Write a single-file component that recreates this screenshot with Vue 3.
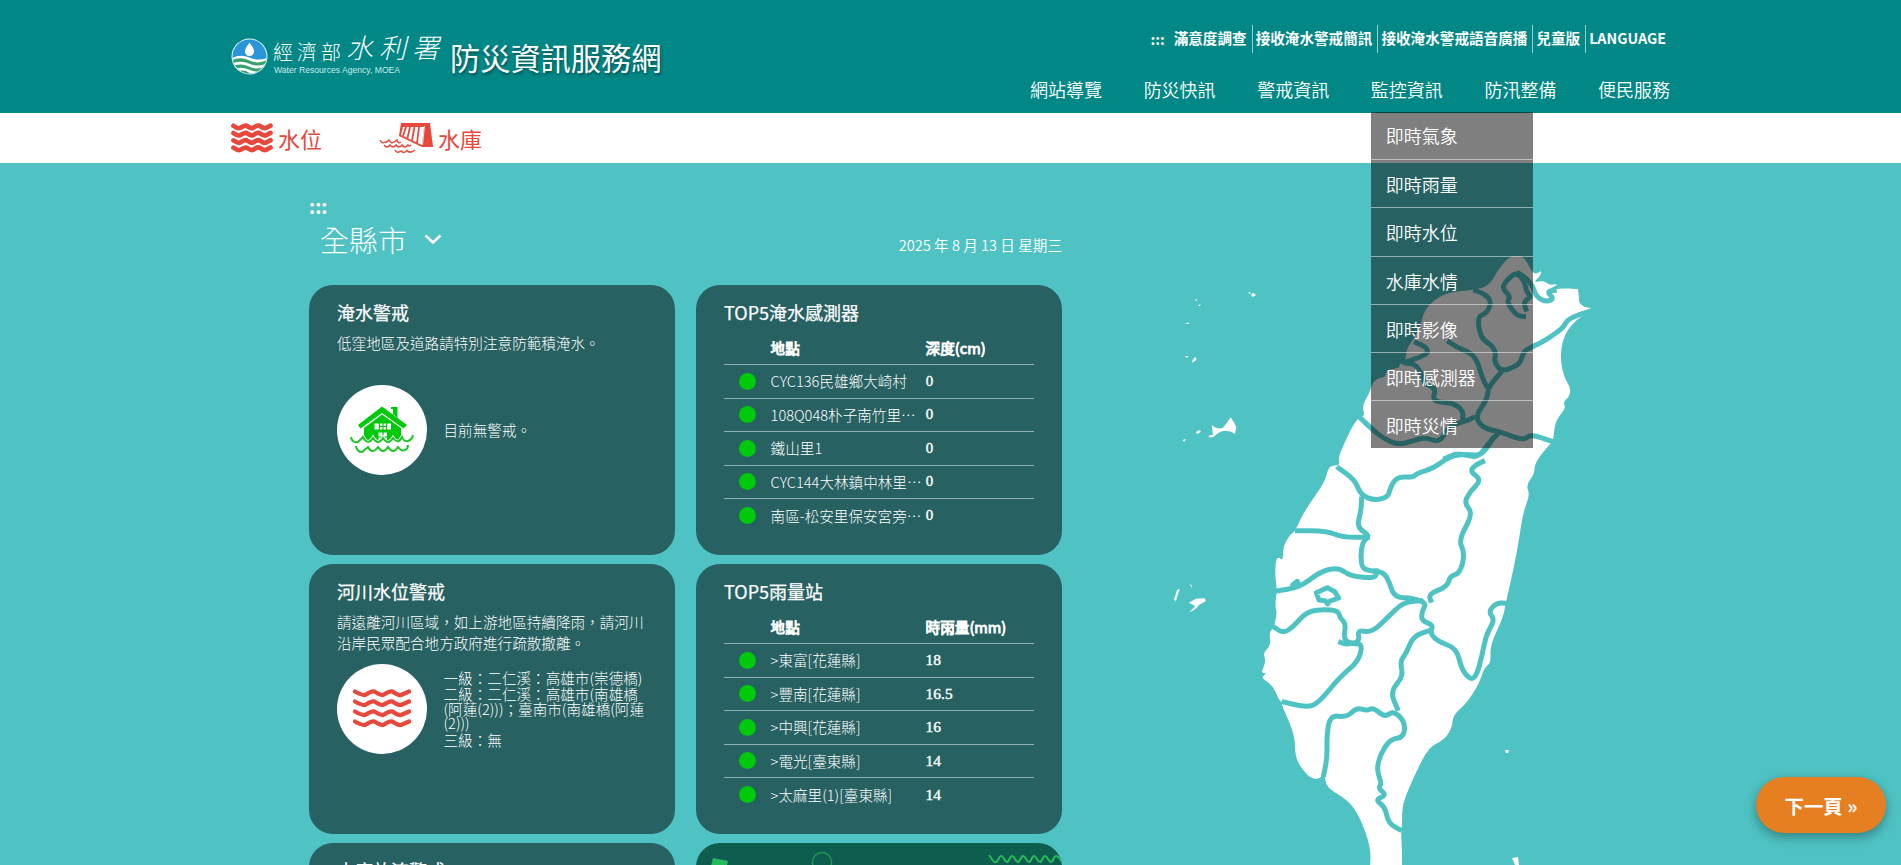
<script setup>
const topLinks = ['滿意度調查', '接收淹水警戒簡訊', '接收淹水警戒語音廣播', '兒童版', 'LANGUAGE']
const nav = ['網站導覽', '防災快訊', '警戒資訊', '監控資訊', '防汛整備', '便民服務']
const menu = ['即時氣象', '即時雨量', '即時水位', '水庫水情', '即時影像', '即時感測器', '即時災情']
const flood = [
  ['CYC136民雄鄉大崎村', '0'],
  ['108Q048朴子南竹里…', '0'],
  ['鐵山里1', '0'],
  ['CYC144大林鎮中林里…', '0'],
  ['南區-松安里保安宮旁…', '0'],
]
const rain = [
  ['>東富[花蓮縣]', '18'],
  ['>豐南[花蓮縣]', '16.5'],
  ['>中興[花蓮縣]', '16'],
  ['>電光[臺東縣]', '14'],
  ['>太麻里(1)[臺東縣]', '14'],
]

// Rounds a list of points into a smooth path through segment midpoints.
function smooth(str, closed = false) {
  const p = str.trim().split(/\s+/).map((s) => s.split(',').map(Number))
  const mid = (a, b) => `${((a[0] + b[0]) / 2).toFixed(1)},${((a[1] + b[1]) / 2).toFixed(1)}`
  const n = p.length
  if (closed) {
    let d = `M${mid(p[n - 1], p[0])}`
    for (let i = 0; i < n; i++) d += `Q${p[i]} ${mid(p[i], p[(i + 1) % n])}`
    return d + 'Z'
  }
  let d = `M${p[0]}L${mid(p[0], p[1])}`
  for (let i = 1; i < n - 1; i++) d += `Q${p[i]} ${mid(p[i], p[i + 1])}`
  return d + `L${p[n - 1]}`
}

const land = smooth(`1512,256 1522,256 1527,262 1532,272 1536,274 1541,271 1541,271 1541,275 1535,281 1535,282 1543,281 1547,283
 1550,285 1557,284 1557,285 1551,288 1549,291 1560,288 1578,289 1578,289 1578,289 1579,298 1579,303 1584,307 1591,308 1591,308 1590,311 1577,319
 1565,333 1560,353 1563,375 1571,389 1569,397 1563,402 1566,408 1556,420 1554,432 1553,441 1550,444 1535,462 1534,475 1526,485 1530,495
 1523,512 1517,553 1506,602 1503,618 1490,645 1491,663 1484,668 1479,684 1466,704 1453,715 1452,728 1444,740 1429,747 1416,772 1404,800
 1402,812 1402,826 1401,832 1402,850 1402,870 1402,870 1370,870 1370,870 1371,848 1360,817 1348,800 1327,788 1325,777 1322,772 1322,777 1314,780 1305,773
 1295,758 1295,735 1282,706 1282,702 1279,700 1273,686 1262,678 1263,676 1267,673 1262,673 1262,671 1266,661 1263,653 1271,645
 1269,632 1274,628 1275,622 1277,612 1275,606 1277,590 1275,574 1276,559 1279,557 1283,561 1283,547 1289,536 1294,532 1296,529 1305,510
 1325,482 1328,468 1334,465 1340,465 1338,458 1344,444 1352,427 1359,417 1365,416 1362,406 1369,394 1374,379 1386,377 1386,370 1400,368 1399,364
 1405,363 1407,348 1413,340 1420,328 1424,311 1435,299 1450,292 1473,290 1489,286 1498,270 1506,260`, true)

const north = [
  '340,570 375,582 395,605 380,640 352,650 362,715 395,735 408,760 402,785 425,815 465,800 483,785 490,755 519,738 545,728 590,698 612,680 625,655 700,630',
  '498,650 470,648 440,605 452,590 426,565 440,540 470,516 495,545 498,575 515,590 490,605 500,635',
  '470,516 500,535 519,560 530,592 560,606 582,596 560,575 590,570',
  '262,722 290,742 335,760 355,790 365,830 385,870 395,850 425,815',
  '385,870 380,900 345,950 370,985 420,995 490,1022 512,1002 578,1025',
  '162,725 200,742 205,762 155,780 125,790 165,790 190,830 190,850 230,865 215,905 280,908 312,935 305,970 345,950',
  '310,965 265,980 240,1028 195,1012 160,1022 115,1035 70,1015 33,985 -8,945',
  '250,1078 290,1060 320,1066 355,1072 385,1030 420,995',
]
const middle = [
  '290,80 345,120 362,165 405,182 445,170 450,145 470,110 520,112 530,100 580,85 630,48 680,42 725,48 762,-10',
  '365,170 363,215 350,262 392,288 365,305 362,380 385,392 430,396 448,425 462,472 520,474 560,490 545,515 545,542 580,555 570,580 595,605 650,625 665,690 695,722 712,700 725,650 740,580 765,540 745,515 770,488 800,490',
  '165,272 260,272 305,292 390,292',
  '735,62 705,75 690,95 725,120 690,155 672,190 700,220 655,300 675,340 660,400 630,408 622,440 565,462 575,488',
  '105,454 180,442 240,395 295,382 330,408 410,416 408,385',
  '100,560 130,580 160,560 200,515 250,508 295,512 300,535 318,550 310,600 340,612 368,612 355,665 300,710 235,790 200,802 125,785',
  '295,605 320,614 360,605 352,570 395,578 440,535 490,486 550,482',
  '575,570 520,588 498,640 480,665 490,710 450,755 475,812',
]
const south = [
  '250,410 262,350 260,290 270,225 320,232 350,203 380,212 400,203 435,232 460,212 495,245 492,292 450,298 420,345 410,390 425,430 415,445 440,465 405,480 435,500 445,550 485,572',
]

const zigzag = smooth('293,12 300,22 305,10 311,22 316,10 322,22 327,10 333,22 338,10 344,22 349,10 355,22 360,10 368,22')
</script>

<template>
  <div class="page">
    <header class="header">
      <div class="brand">
        <svg class="emblem" viewBox="0 0 36 36">
          <defs><clipPath id="disc"><circle cx="18" cy="18" r="16.5" /></clipPath></defs>
          <circle cx="18" cy="18" r="17.5" fill="#dff1f2" />
          <g clip-path="url(#disc)">
            <rect width="36" height="36" fill="#2a95d8" />
            <path d="M0 20Q9 15 18 19Q27 23 36 19V36H0Z" fill="#fff" />
            <path d="M0 22Q9 17.500 18 22Q27 26 36 21V24Q27 29 18 25Q9 21 0 25Z" fill="#35a36b" />
            <path d="M0 28Q9 23.500 18 28Q27 32 36 26V29.500Q27 35 18 31Q9 27 0 31Z" fill="#35a36b" />
            <path d="M6 33Q12 30 18 34L24 36H8Z" fill="#35a36b" />
          </g>
          <path d="M18 4.500Q22.500 10 22.500 13A4.500 4.500 0 0 1 13.500 13Q13.500 10 18 4.500Z" fill="#fff" />
        </svg>
        <div class="agency">
          <div class="agency-name"><span class="ministry">經濟部</span><span class="bureau">水利署</span></div>
          <div class="agency-en">Water Resources Agency, MOEA</div>
        </div>
        <h1>防災資訊服務網</h1>
      </div>
      <div class="menus">
        <div class="toplinks">
          <span class="marker">:::</span>
          <a v-for="l in topLinks" :key="l">{{ l }}</a>
        </div>
        <nav>
          <div v-for="n in nav" :key="n" class="nav-item">
            {{ n }}
            <ul v-if="n === '監控資訊'" class="dropdown">
              <li v-for="m in menu" :key="m">{{ m }}</li>
            </ul>
          </div>
        </nav>
      </div>
    </header>

    <div class="alerts">
      <div class="alert">
        <svg width="42" height="30" viewBox="0 0 42 30" fill="none" stroke="#e8473c" stroke-width="4.700" stroke-linecap="round" stroke-linejoin="round">
          <path v-for="i in 4" :key="i" :transform="`translate(0 ${(i - 1) * 7.3})`" d="M2.500 2.800Q7 6 9 5Q14.500 1.500 16 3Q20.500 6 22 5Q27 1.500 29 3Q33 6 35 5L39.500 2.600" />
        </svg>
        <span>水位</span>
      </div>
      <div class="alert">
        <svg width="54" height="32" viewBox="0 0 54 32">
          <path d="M22 1H51L54 25H43L20 14Z" fill="#e8473c" />
          <path d="M24 5H45L43 23L22 13Z" fill="#fff" />
          <path d="M27 5L24 14M31 5L28.500 16M35.500 5L33 18.500M40 5L38 21" stroke="#e8473c" stroke-width="1.800" />
          <path d="M45.500 4L43.500 23" stroke="#fff" stroke-width=".8" />
          <g fill="none" stroke="#e8473c" stroke-width="1.500">
            <path d="M1 18Q3 22 6 20Q7 21 10 18Q12 22 15 20L18 18Q19 22 22 20" />
            <path d="M5 23Q8 27 11 23Q14 27 17 23Q20 27 23 23Q26 27 29 23Q30 25 32 23" />
            <path d="M16 28Q18 32 22 29Q25 32 28 28.500Q31 32 36 28" />
          </g>
        </svg>
        <span>水庫</span>
      </div>
    </div>

    <main>
      <section class="left">
        <div class="dots">:::</div>
        <div class="filter">
          <div class="county">全縣市
            <svg width="18" height="11" viewBox="0 0 18 11" fill="none" stroke="#fff" stroke-width="2.400"><path d="M1.500 1.500L9 8.500L16.500 1.500" /></svg>
          </div>
          <div class="date">2025 年 8 月 13 日 星期三</div>
        </div>
        <div class="cards">
          <article class="card">
            <h2>淹水警戒</h2>
            <p class="desc">低窪地區及道路請特別注意防範積淹水。</p>
            <div class="status">
              <div class="disc">
                <svg width="64" height="48" viewBox="0 0 64 48">
                  <path d="M41 1H47.500V12L43 8V3H41Z" fill="#00c80a" />
                  <path d="M32 0.500L57 19L53.500 22.500L32 7L10.500 22.500L8 19Z" fill="#00c80a" />
                  <path d="M32 8.500L51 22V35Q46 37 43 33Q38 38 33 33Q28 38 23 33Q18 37 14 31V22Z" fill="#00c80a" />
                  <path d="M24.500 17.500H41V23.500H24.500ZM28.500 26.500H37V35H28.500Z" fill="#fff" />
                  <path d="M29.500 17V24M33 17V24M36.500 17V24M29 20.500H37M33 26V35M28 31H38" stroke="#00c80a" stroke-width="1.200" />
                  <path d="M1 31Q2 37 8 36L13 31Q18 40 23 32Q28 40 33 32Q38 40 43 32Q48 39 52 31Q54 36 58 35Q62 34 63 29" fill="none" stroke="#fff" stroke-width="3.600" />
                  <g fill="none" stroke="#1fc42a" stroke-width="2"><path d="M1 31Q2 37 8 36L13 31Q18 40 23 32Q28 40 33 32Q38 40 43 32Q48 39 52 31Q54 36 58 35Q62 34 63 29" /><path d="M6 40Q7 46 12 46L18 41Q22 49 28 41Q33 49 38 41Q43 49 48 41Q52 46 55 44Q58 43 58 39" /></g>
                </svg>
              </div>
              <div class="lines"><p>目前無警戒。</p></div>
            </div>
          </article>

          <article class="card">
            <h2>TOP5淹水感測器</h2>
            <div class="table">
              <div class="tr th"><span></span><span>地點</span><span>深度(cm)</span></div>
              <div v-for="r in flood" :key="r[0]" class="tr"><i></i><span class="place">{{ r[0] }}</span><b class="zero">{{ r[1] }}</b></div>
            </div>
          </article>

          <article class="card">
            <h2>河川水位警戒</h2>
            <p class="desc">請遠離河川區域，如上游地區持續降雨，請河川沿岸民眾配合地方政府進行疏散撤離。</p>
            <div class="status">
              <div class="disc">
                <svg width="60" height="42" viewBox="0 0 60 42" fill="none" stroke="#e8473c" stroke-width="4.300" stroke-linecap="round" stroke-linejoin="round">
                  <path v-for="i in 4" :key="i" :transform="`translate(0 ${(i - 1) * 10})`" d="M3 3.500Q10 7.500 13 7Q20 2.500 22.500 3.500Q29 7.500 31 7Q38 2.500 40.500 3.500Q46 7.500 49 7L57 3.500" />
                </svg>
              </div>
              <div class="lines">
                <p>一級：二仁溪：高雄市(崇德橋)</p>
                <p>二級：二仁溪：高雄市(南雄橋(阿蓮(2)))；臺南市(南雄橋(阿蓮(2)))</p>
                <p>三級：無</p>
              </div>
            </div>
          </article>

          <article class="card">
            <h2>TOP5雨量站</h2>
            <div class="table">
              <div class="tr th"><span></span><span>地點</span><span>時雨量(mm)</span></div>
              <div v-for="r in rain" :key="r[0]" class="tr"><i></i><span class="place">{{ r[0] }}</span><b>{{ r[1] }}</b></div>
            </div>
          </article>

          <article class="card"><h2>水庫放流警戒</h2></article>
          <article class="card promo">
            <svg width="366" height="60" viewBox="0 0 366 60" fill="none">
              <path d="M17 15L32 18L28 34L13 31Z" fill="#27ba5c" />
              <circle cx="126" cy="19" r="9.500" stroke="#1e9655" stroke-width="1.600" />
              <path :d="zigzag" stroke="#27ba5c" stroke-width="2" />
            </svg>
          </article>
        </div>
      </section>

      <svg class="map" viewBox="1160 240 460 625">
        <path :d="land" fill="#fff" />
        <g class="borders">
          <g transform="translate(1360 100) scale(.33333)"><path v-for="b in north" :key="b" :d="smooth(b)" /></g>
          <g transform="translate(1240 440) scale(.33333)">
            <path v-for="b in middle" :key="b" :d="smooth(b)" />
            <path d="M229 458L262 443L284 455L296 474L268 484L263 492L255 482L237 480Z" />
            <path d="M158 435L172 424L174 438Z" />
          </g>
          <g transform="translate(1240 640) scale(.33333)"><path v-for="b in south" :key="b" :d="smooth(b)" /></g>
        </g>
        <g transform="translate(1160 240) scale(.33333)" fill="#fff">
          <path d="M155 555Q175 572 190 562Q200 550 212 532Q222 545 229 562L225 582Q195 562 168 584Q160 594 147 592L146 587L159 584Z" />
          <path d="M107 577L118 570L123 575L112 582ZM68 600L77 597L73 606ZM96 368L98 360L106 350L110 360ZM74 349L86 348L81 354ZM75 251L86 247V252ZM105 180L110 176V184ZM114 195L123 193L118 199ZM264 157H272L270 163ZM273 164L280 158L288 165L278 171Z" />
          <path d="M42 1080L51 1050L60 1047Q55 1058 48 1082ZM89 1032L95 1036V1044ZM86 1088L108 1076L135 1075L137 1084L118 1094Q108 1108 89 1116L106 1098Z" />
        </g>
        <path d="M1505 750H1509L1508 753H1506ZM1512 858L1518 857L1519 865H1515Z" fill="#fff" />
      </svg>
    </main>

    <a class="next">下一頁 »</a>
  </div>
</template>

<style>
html, body { margin: 0; overflow: hidden; }
</style>

<style scoped>
.page { position: relative; width: 1901px; height: 865px; overflow: hidden; background: #4fc3c4; color: #fff; font-family: "Noto Sans CJK TC", sans-serif; font-size: 14.6px; }
h1, h2, p, ul { margin: 0; padding: 0; }
.header { box-sizing: border-box; height: 113px; background: #008786; padding: 0 227px 0 231px; display: flex; justify-content: space-between; }
.brand { display: flex; align-items: flex-start; padding-top: 35px; }
.emblem { width: 37px; height: 37px; margin: 3px 5px 0 0; }
.agency { width: 172px; margin-right: 5px; }
.agency-name { display: flex; align-items: center; height: 31px; margin-top: -1px; white-space: nowrap; font-weight: 300; }
.ministry { font-size: 20px; letter-spacing: 4px; padding-top: 3px; width: 75px; }
.bureau { font-size: 27px; letter-spacing: 6px; font-style: italic; margin-top: -6px; }
.agency-en { font: 8.6px/10px "Liberation Sans", sans-serif; white-space: nowrap; color: #cfeaea; margin-left: 1px; }
h1 { font-size: 30.2px; line-height: 44px; font-weight: 400; text-shadow: 1px 2px 3px rgba(0, 0, 0, .4); }
.menus { display: flex; flex-direction: column; align-items: flex-end; }
.toplinks { display: flex; align-items: center; height: 28px; margin: 25px 8px 0 0; font-weight: 700; }
.toplinks a { padding: 0 5px 2px 3px; line-height: 26px; border-right: 1px solid rgba(255, 255, 255, .6); }
.toplinks a:last-child { border: 0; padding-right: 0; font-size: 14.3px; }
.marker { margin-right: 6px; padding-bottom: 2px; }
nav { display: flex; gap: 41.6px; font-size: 18px; font-weight: 350; margin-top: 21px; margin-right: 4px; }
.nav-item { position: relative; height: 38px; line-height: 30px; white-space: nowrap; }
.dropdown { position: absolute; z-index: 5; left: 0; top: 38px; width: 162px; list-style: none; background: rgba(0, 0, 0, .5); font-weight: 350; }
.dropdown li { box-sizing: border-box; height: 48.2px; line-height: 49px; padding-left: 15px; border-bottom: 1px solid rgba(255, 255, 255, .5); }
.dropdown li:first-child { line-height: 47px; }
.dropdown li:last-child { border: 0; height: 47px; }
.alerts { height: 50px; background: #fff; padding-left: 231px; display: flex; gap: 57px; }
.alert { display: flex; align-items: center; gap: 5px; font-size: 22px; color: #e8473c; }
.alert span { margin-top: -1px; }
main { display: grid; grid-template-columns: 753px 460px; column-gap: 98px; padding-left: 309px; }
.dots { height: 23px; line-height: 20px; font-size: 19px; font-weight: 700; padding-top: 33px; }
.filter { display: flex; justify-content: space-between; height: 66px; padding-left: 11px; }
.county { font-size: 29px; line-height: 40px; font-weight: 300; display: flex; align-items: center; gap: 17px; height: 40px; }
.date { padding-top: 16px; line-height: 20px; font-weight: 350; }
.cards { display: grid; grid-template-columns: 366px 366px; grid-auto-rows: 270px; gap: 9px 21px; }
.card { box-sizing: border-box; padding: 13px 28px 0; border-radius: 24px; background: rgba(0, 0, 0, .5); font-weight: 300; overflow: hidden; }
.card h2 { font-size: 18px; line-height: 28px; font-weight: 400; height: 34px; -webkit-text-stroke: .25px #fff; }
.desc { line-height: 21px; height: 53px; width: 312px; }
.status { display: flex; align-items: center; gap: 16.5px; height: 90px; }
.disc { flex: none; width: 90px; height: 90px; border-radius: 50%; background: #fff; display: flex; align-items: center; justify-content: center; }
.lines p { line-height: 14.6px; margin: 2px 0; }
.tr { display: grid; grid-template-columns: 46.6px 155px 108px; align-items: center; box-sizing: border-box; height: 33.5px; border-bottom: 1px solid rgba(255, 255, 255, .5); }
.tr span { margin-top: -1px; }
.tr:last-child { border: 0; }
.tr.th { height: 33px; padding-bottom: 1px; font-weight: 400; -webkit-text-stroke: .9px #fff; }
.tr i { width: 17px; height: 17px; border-radius: 50%; background: #00c80a; margin-left: 15px; }
.place { white-space: nowrap; }
.tr b { font: 400 15.5px "Liberation Serif", serif; -webkit-text-stroke: .4px #fff; }
.tr b.zero { font: 400 12.5px "DejaVu Serif", serif; }
.promo { padding: 0; background: #0e5e50; }
.map { width: 460px; height: 625px; margin-top: 77px; }
.borders { fill: none; stroke: #4fc3c4; stroke-width: 15; stroke-linejoin: round; }
.next { position: absolute; left: 1756px; top: 777px; width: 130px; height: 56px; border-radius: 28px; background: #e67e22; font-size: 19.4px; font-weight: 700; line-height: 58px; text-align: center; box-shadow: 0 4px 12px rgba(0, 0, 0, .35); }
</style>
